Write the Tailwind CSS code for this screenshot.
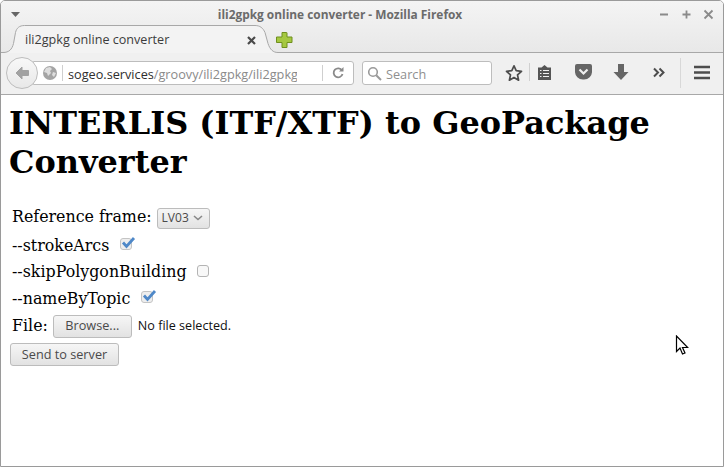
<!DOCTYPE html>
<html>
<head>
<meta charset="utf-8">
<script src="https://cdn.jsdelivr.net/npm/@tailwindcss/browser@4"></script>
</head>
<body class="bg-white">
<div class="w-[724px] h-[467px] overflow-hidden flex flex-col border border-[#9a9a9a] rounded-t-[5px] font-['Open_Sans',sans-serif] bg-white">
  <!-- chrome top -->
  <div class="h-[52px] shrink-0 relative bg-gradient-to-b from-[#f4f4f4] to-[#e8e8e8] border-b border-[#a8a8a8]">
    <div class="h-[26px] flex items-center justify-between pl-[10px] pr-[9px]">
      <svg width="10" height="5" viewBox="0 0 10 5"><path d="M0 0h9L4.500 5z" fill="#666"/></svg>
      <span class="absolute left-0 right-[44px] top-[4px] text-center text-[11.9px] leading-[18px] font-bold text-[#6b6b6b]">ili2gpkg online converter - Mozilla Firefox</span>
      <div class="flex items-center gap-[11px] relative">
        <svg width="11" height="11" viewBox="0 0 11 11"><path d="M1 5.500h8" stroke="#8a8a8a" stroke-width="1.800"/></svg>
        <svg width="11" height="11" viewBox="0 0 11 11"><path d="M1.500 5.500h8M5.500 1.500v8" stroke="#8a8a8a" stroke-width="1.800"/></svg>
        <svg width="11" height="11" viewBox="0 0 11 11"><path d="M1.500 1.500l8 8M9.500 1.500l-8 8" stroke="#8a8a8a" stroke-width="1.800"/></svg>
      </div>
    </div>
    <!-- tab -->
    <svg class="absolute left-0 top-[24px]" width="280" height="30" viewBox="0 0 280 30"><path d="M0 27.500h2c6 0 9-3 10.500-9l2-11c1-4.500 4-7 9-7H254c5 0 8 2.500 10 7l3 11c2 6 5 9 10 9V29H0z" fill="#f3f3f3"/><path d="M0 27.500h2c6 0 9-3 10.500-9l2-11c1-4.500 4-7 9-7H254c5 0 8 2.500 10 7l3 11c2 6 5 9 10 9" fill="none" stroke="#a8a8a8"/></svg>
    <span class="absolute left-[24px] top-[30px] text-[12.600px] leading-[18px] text-[#3c3c3c]">ili2gpkg online converter</span>
    <svg class="absolute left-[246px] top-[35px]" width="9" height="9" viewBox="0 0 9 9"><path d="M1 1l7 7M8 1l-7 7" stroke="#4a4a4a" stroke-width="2.200"/></svg>
    <svg class="absolute left-[275px] top-[31px]" width="17" height="16" viewBox="0 0 17 16"><path d="M6 .500h4.500a.500.500 0 0 1 .500.500v4h5v5.500h-5V15.500H6v-5H.500V5H6z" fill="#a5c840" stroke="#6f8f1e"/></svg>
  </div>
  <!-- nav bar -->
  <div class="h-[42px] shrink-0 relative bg-[#f0f0f0] border-b border-[#a8a8a8] flex items-center">
    <div class="absolute left-[32px] top-[8px] w-[321px] h-[24px] bg-white border border-[#bdbdbd] rounded-r-[3px] flex items-center pl-[28px]">
      <div class="w-px h-[16px] bg-[#cfcfcf] mr-[5px] shrink-0"></div>
      <div class="w-[229px] shrink-0 overflow-hidden whitespace-nowrap pt-px text-[12.700px] leading-[18px] text-[#2e2e2e]">sogeo.services<span class="text-[#8a8a8a]">/groovy/ili2gpkg/ili2gpkg.html</span></div>
      <div class="w-px h-[16px] bg-[#cfcfcf] ml-[25px] shrink-0"></div>
      <svg class="ml-[9px] shrink-0" width="12" height="12" viewBox="0 0 12 12"><path d="M10 3.500A4.500 4.500 0 1 0 10.500 7" fill="none" stroke="#8a8a8a" stroke-width="1.800"/><path d="M7 4.500h4.500V0z" fill="#8a8a8a"/></svg>
    </div>
    <div class="absolute left-[5px] top-[4px] w-[32px] h-[32px] rounded-full border border-[#bdbdbd] bg-gradient-to-b from-[#f8f8f8] to-[#e8e8e8] flex items-center justify-center">
      <svg width="16" height="14" viewBox="0 0 16 14"><path d="M8 1L2 7l6 6V9.500h6.500v-5H8z" fill="#a2a2a2" stroke="#a2a2a2" stroke-linejoin="round"/></svg>
    </div>
    <svg class="absolute left-[41px] top-[12px]" width="16" height="16" viewBox="0 0 16 16"><circle cx="8" cy="8" r="7" fill="#a4a4a4"/><path d="M4 3l4-1 2 2-2 2 1 2-3 3-1-3-3-1zM11 7l3 1-2 4-2-2z" fill="#dedede"/></svg>
    <div class="absolute left-[361px] top-[8px] w-[130px] h-[24px] bg-white border border-[#bdbdbd] rounded-[3px] flex items-center pl-[4px]">
      <svg width="15" height="15" viewBox="0 0 15 15"><circle cx="6" cy="6" r="4.300" fill="none" stroke="#9a9a9a" stroke-width="1.600"/><path d="M9.200 9.200L14 14" stroke="#9a9a9a" stroke-width="2"/></svg>
      <span class="ml-[4px] pt-px text-[12.700px] leading-[18px] text-[#8f8f8f]">Search</span>
    </div>
    <svg class="absolute left-[504px] top-[11px]" width="18" height="18" viewBox="0 0 18 18"><path d="M9 1.800l2.200 4.900 5.300.6-4 3.600 1.100 5.300L9 13.500 4.400 16.200l1.100-5.300-4-3.600 5.300-.6z" fill="none" stroke="#4d4d4d" stroke-width="1.700" stroke-linejoin="round"/></svg>
    <div class="absolute left-[528px] top-[10px] w-px h-[18px] bg-[#d0d0d0]"></div>
    <svg class="absolute left-[536px] top-[11px]" width="15" height="17" viewBox="0 0 15 17"><path d="M1 3.500h3.500L7.500 1l3 2.500H14V16H1z" fill="#555"/><path d="M3 6.500h1.500M6 6.500h6M3 9.500h1.500M6 9.500h6M3 12.500h1.500M6 12.500h6" stroke="#f0f0f0" stroke-width="1.200"/></svg>
    <svg class="absolute left-[574px] top-[11px]" width="17" height="16" viewBox="0 0 17 16"><path d="M2 0h13a2 2 0 0 1 2 2v5a8 8 0 0 1-8.500 8.500A8 8 0 0 1 0 7V2a2 2 0 0 1 2-2z" fill="#666"/><path d="M4.500 5.500l4 4 4-4" fill="none" stroke="#f0f0f0" stroke-width="2.200"/></svg>
    <svg class="absolute left-[612px] top-[11px]" width="16" height="17" viewBox="0 0 16 17"><path d="M5 0h6v8h4.500L8 16 .500 8H5z" fill="#666"/></svg>
    <svg class="absolute left-[652px] top-[14px]" width="13" height="11" viewBox="0 0 13 11"><path d="M1 1.500l4 4-4 4M6.500 1.500l4 4-4 4" fill="none" stroke="#4d4d4d" stroke-width="2"/></svg>
    <div class="absolute left-[679px] top-[5px] w-px h-[30px] bg-[#d8d8d8]"></div>
    <svg class="absolute left-[693px] top-[12px]" width="16" height="15" viewBox="0 0 16 15"><path d="M0 2h16M0 7.500h16M0 13h16" stroke="#4d4d4d" stroke-width="2.400"/></svg>
  </div>
  <!-- content -->
  <div class="relative flex-1 px-[8px] pt-[9px] font-['DejaVu_Serif',serif] text-[#000] text-[15.850px]">
    <h1 class="text-[31.950px] leading-[39px] font-bold">INTERLIS (ITF/XTF) to GeoPackage Converter</h1>
    <div class="mt-[19px] pl-[3px] flex flex-col">
      <div class="h-[31px] flex items-center">
        <span>Reference frame:</span>
        <div class="ml-[5px] mt-[3px] w-[53px] h-[21px] bg-gradient-to-b from-[#f6f6f6] to-[#e2e2e2] border border-[#bcbcbc] rounded-[3px] flex items-center pl-[4px] font-['Open_Sans',sans-serif] text-[12px] leading-[16px] text-[#4a4a4a]">LV03<svg class="ml-[4px]" width="10" height="6" viewBox="0 0 10 6"><path d="M1 1l4 3.500L9 1" fill="none" stroke="#888" stroke-width="1.600"/></svg></div>
      </div>
      <div class="h-[27px] flex items-center">
        <span>--strokeArcs</span>
        <div class="ml-[11px] relative w-[12px] h-[12px] bg-[#eeeeee] border border-[#c4c4c4] rounded-[3px] mb-[3px]"><svg class="absolute -left-px -top-[3px]" width="16" height="14" viewBox="0 0 16 14"><path d="M3 6.500l3.500 4L14 2" fill="none" stroke="#4f88c8" stroke-width="2.800"/></svg></div>
      </div>
      <div class="h-[26px] flex items-center">
        <span>--skipPolygonBuilding</span>
        <div class="ml-[10px] w-[12px] h-[12px] bg-[#f8f8f8] border border-[#b4b4b4] rounded-[3px] mb-[3px]"></div>
      </div>
      <div class="h-[27px] flex items-center">
        <span>--nameByTopic</span>
        <div class="ml-[11px] relative w-[12px] h-[12px] bg-[#eeeeee] border border-[#c4c4c4] rounded-[3px] mb-[3px]"><svg class="absolute -left-px -top-[3px]" width="16" height="14" viewBox="0 0 16 14"><path d="M3 6.500l3.500 4L14 2" fill="none" stroke="#4f88c8" stroke-width="2.800"/></svg></div>
      </div>
      <div class="h-[28px] flex items-center">
        <span>File:</span>
        <div class="ml-[5px] w-[79px] h-[23px] bg-gradient-to-b from-[#f6f6f6] to-[#e2e2e2] border border-[#bcbcbc] rounded-[3px] flex items-center justify-center font-['Open_Sans',sans-serif] text-[12.700px] text-[#4a4a4a]">Browse...</div>
        <span class="ml-[6px] font-['Open_Sans',sans-serif] text-[12.600px] text-[#111]">No file selected.</span>
      </div>
    </div>
    <div class="mt-[3px] ml-[1px] w-[109px] h-[23px] bg-gradient-to-b from-[#f6f6f6] to-[#e2e2e2] border border-[#bcbcbc] rounded-[3px] flex items-center justify-center font-['Open_Sans',sans-serif] text-[12.700px] text-[#4a4a4a]">Send to server</div>
    <svg class="absolute left-[674px] top-[240px]" width="14" height="21" viewBox="0 0 14 21"><path d="M1.500 1v15.500l3.500-3.500 2.500 6 2.500-1-2.500-5.500h5.200z" fill="#fff" stroke="#000" stroke-width="1.200"/></svg>
  </div>
</div>
</body>
</html>
